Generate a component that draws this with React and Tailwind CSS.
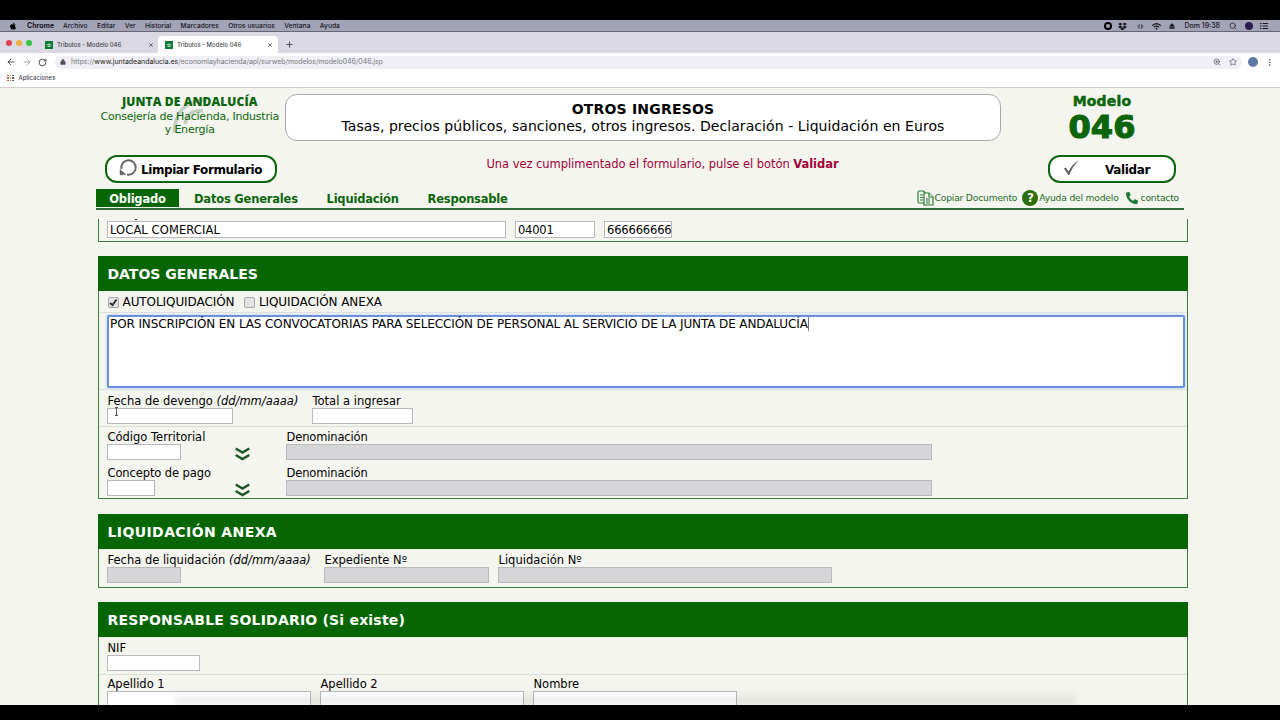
import { ArrowLeft, ArrowRight, RotateCw, Lock, Search, ZoomIn, Star, X, Plus, EllipsisVertical } from 'lucide-react'
import { FaApple, FaDropbox, FaWifi, FaPhoneAlt, FaEject, FaListUl } from 'react-icons/fa'

const menus = ['Archivo', 'Editar', 'Ver', 'Historial', 'Marcadores', 'Otros usuarios', 'Ventana', 'Ayuda']

const appColors = ['bg-[#d9534f]', 'bg-[#c9a04a]', 'bg-[#555555]']

function MenuBar() {
  return (
    <div className="h-[12px] shrink-0 flex items-center bg-[#a3a3b8] border-b border-[#666675] pt-px text-[6.7px] leading-[10px] font-medium text-[#16161c] whitespace-nowrap">
      <FaApple size={8} className="ml-[9px] mr-[10px] text-black" />
      <span className="font-bold mr-[9px] text-[7px]">Chrome</span>
      <div className="flex gap-[9.3px]">
        {menus.map((m) => <span key={m}>{m}</span>)}
      </div>
      <div className="ml-auto flex items-center pr-[12px]">
        <span className="size-2 rounded-full border-[2.5px] border-black mr-[6px]" />
        <FaDropbox size={9} className="mr-[10px]" />
        <svg width="7" height="7" viewBox="0 0 7 7" fill="none" stroke="#44444e" strokeWidth=".8" className="mr-[8px]">
          <path d="M1 2V5M2.300 1V6M5.700 2V5M4.500 1V6" />
        </svg>
        <FaWifi size={9} className="mr-[8px]" />
        <FaEject size={6} className="mr-[9px]" />
        <span className="mr-[9px] text-[7px]">Dom 19:38</span>
        <Search size={8} className="mr-[8px]" />
        <span className="size-2 rounded-full bg-[#2b1d50] mr-[7px]" />
        <FaListUl size={8} />
      </div>
    </div>
  )
}

function Favicon() {
  return (
    <svg width="8" height="8" viewBox="0 0 8 8">
      <rect width="8" height="8" fill="#0b7a35" />
      <path d="M1.5 4.2Q4 1.500 6.5 4.2M4 3V5.500M2.5 5.500H5.5" stroke="#d8efdd" strokeWidth=".8" fill="none" />
    </svg>
  )
}

function Tab({ active }) {
  return (
    <div className={active
      ? 'w-[120px] h-[17px] self-end flex items-center bg-white rounded-t pl-[7px] pr-[5px]'
      : 'w-[120px] h-[17px] self-end flex items-center pl-[7px] pr-[4px]'}
    >
      <Favicon />
      <span className="ml-[4px]">Tributos - Modelo 046</span>
      <X size={6} strokeWidth={3} className="ml-auto" />
    </div>
  )
}

function Browser() {
  return (
    <div className="shrink-0 text-[6px] font-medium text-[#4a4a50]">
      <div className="h-[21px] flex items-center bg-[#d9d8e3]">
        <div className="flex gap-1 pl-1.5 w-[38px]">
          <span className="size-[6px] rounded-full bg-[#e0404f]" />
          <span className="size-[6px] rounded-full bg-[#eeb13c]" />
          <span className="size-[6px] rounded-full bg-[#35c649]" />
        </div>
        <Tab />
        <Tab active />
        <Plus size={9} strokeWidth={2.5} className="ml-[7px] mt-[3px]" />
      </div>
      <div className="h-[18px] flex items-center bg-white">
        <ArrowLeft size={10} className="ml-1.5 text-[#333]" />
        <ArrowRight size={10} className="ml-1.5 text-[#999]" />
        <RotateCw size={9} strokeWidth={2.5} className="ml-1.5 text-[#444]" />
        <div className="ml-[8px] h-[13px] w-[1187px] rounded-full bg-[#f0eff5] flex items-center px-[5px]">
          <Lock size={6} fill="#555" />
          <span className="ml-[5px] text-[6.93px] font-normal text-[#77777d]">
            https://<span className="text-[#1d1d20]">www.juntadeandalucia.es</span>/economiayhacienda/apl/surweb/modelos/modelo046/046.jsp
          </span>
          <ZoomIn size={8} className="ml-auto" />
          <Star size={8} className="ml-2" />
        </div>
        <span className="ml-1.5 size-[10px] rounded-full bg-[#6078a5]" />
        <EllipsisVertical size={9} className="ml-[7px]" />
      </div>
      <div className="h-[17px] flex items-center bg-white border-b border-[#cfcfcf]">
        <div className="ml-[7px] -mt-[2px] grid grid-cols-3 gap-[1px]">
          {[0, 1, 2, 3, 4, 5, 6, 7, 8].map((i) => (
            <span key={i} className={`size-[1.5px] ${appColors[i % 3]}`} />
          ))}
        </div>
        <span className="ml-[5px] -mt-[3px]">Aplicaciones</span>
      </div>
    </div>
  )
}

function Header() {
  return (
    <div className="flex h-[62px] pt-1.5">
      <div className="relative ml-[94.5px] w-[190.5px] text-center text-[#0b650b]">
        <svg className="absolute left-[72px] top-[2px]" width="46" height="40" viewBox="0 0 46 40" fill="none" stroke="#c3cdc0" strokeWidth="3.5">
          <path d="M7 37C8 17 18 4 40 4" />
          <path d="M18 28C20 17 26 14 36 15" />
        </svg>
        <div className="relative text-[12px] leading-[16px] tracking-[0.1px] font-extrabold font-['Open_Sans',sans-serif]">JUNTA DE ANDALUCÍA</div>
        <div className="relative text-[11px] leading-[12.5px] pt-px tracking-[-0.22px]">Consejería de Hacienda, Industria<br />y Energía</div>
      </div>
      <div className="w-[716px] h-[47px] rounded-xl border border-[#a8a8a8] bg-white text-center text-[14px] leading-[17px] pt-[6px] text-black">
        <div className="font-bold tracking-[0.2px]">OTROS INGRESOS</div>
        <div className="tracking-[0.07px]">Tasas, precios públicos, sanciones, otros ingresos. Declaración - Liquidación en Euros</div>
      </div>
      <div className="w-[202px] text-center font-bold text-[#0b650b]">
        <div className="text-[14px] leading-[15px] tracking-[0.2px] [-webkit-text-stroke:0.5px]">Modelo</div>
        <div className="text-[32px] leading-[37px] [-webkit-text-stroke:1.2px]">046</div>
      </div>
    </div>
  )
}

function Actions() {
  return (
    <div className="flex h-[39px] pt-[5px] pl-[105px] pr-[104px]">
      <button className="w-[172px] h-[28px] flex items-center rounded-xl border-2 border-[#0b650b] bg-white text-[12px] tracking-[-0.42px] font-bold text-black whitespace-nowrap">
        <svg className="ml-[12px] -mt-[3px]" width="19" height="19" viewBox="0 0 19 19" fill="none" stroke="#666" strokeWidth="2">
          <path d="M2.500 11A7.200 7.200 0 1 1 8 16.500" />
          <path d="M1 11.500V17L7 16.500Z" fill="#666" strokeWidth=".5" />
        </svg>
        <span className="ml-[3px] pt-px">Limpiar Formulario</span>
      </button>
      <p className="flex-1 pt-[2px] text-center text-[11.5px] leading-[15px] tracking-[-0.05px] text-[#a00038]">
        Una vez cumplimentado el formulario, pulse el botón <b>Validar</b>
      </p>
      <button className="w-[128px] h-[28px] flex items-center rounded-xl border-2 border-[#0b650b] bg-white text-[12px] tracking-[-0.35px] font-bold text-black">
        <svg className="ml-[13px] -mt-1" width="17" height="17" viewBox="0 0 17 17" fill="#666">
          <path d="M1 9.5L2.800 8.500L5.500 12.500Q9 5 16 1Q10 7 6.200 16H5.200Z" />
        </svg>
        <span className="ml-[25px] pt-px">Validar</span>
      </button>
    </div>
  )
}

function Nav() {
  return (
    <nav className="ml-[96px] w-[1088px] h-[21px] flex items-start border-b-2 border-[#2e6b38] text-[11.5px] tracking-[-0.2px] leading-[20px] font-bold text-[#0b650b]">
      <span className="w-[83px] h-[18px] bg-[#066603] text-white text-center">Obligado</span>
      <span className="ml-[15px] w-[132.500px]">Datos Generales</span>
      <span className="w-[101px]">Liquidación</span>
      <span>Responsable</span>
      <div className="ml-auto mr-[5px] flex items-center text-[9.2px] leading-[17px] font-normal whitespace-nowrap text-[#1d6b28]">
        <svg width="17" height="16" viewBox="0 0 17 16" fill="#f4f5ef" stroke="#2d7a38" strokeWidth="1.2">
          <path d="M1 2.200Q1 1 2.200 1H6.500L9 3.500V13H2.200Q1 13 1 11.800Z" />
          <path d="M3 5H6M3 7.500H6M3 10H6" />
          <path d="M7 3H12L16 7V15H7Z" />
          <path d="M12 3V7H16M9 9H13M9 11H13M9 13H13" />
        </svg>
        <span className="ml-px">Copiar Documento</span>
        <span className="ml-[5px] size-[16px] rounded-full bg-[#2c6e0b] text-white text-[12px] leading-4 font-bold text-center">?</span>
        <span className="ml-[1px]">Ayuda del modelo</span>
        <FaPhoneAlt size={12} className="ml-[7px] rotate-90 -scale-x-100 text-[#1f7a3a]" />
        <span className="ml-[3px]">contacto</span>
      </div>
    </nav>
  )
}

function Field({ label, hint, box, disabled }) {
  return (
    <div>
      <div className="h-[14px] text-[11.5px] leading-[15px] pl-[0.5px] whitespace-nowrap">{label}{hint && <i> {hint}</i>}</div>
      <div className={`${box} h-4 border border-[#b9b9bd] ${disabled ? 'bg-[#d6d5d8]' : 'bg-white'}`} />
    </div>
  )
}

function DoubleChevron() {
  return (
    <svg className="ml-[2.500px] mr-[36.500px] mt-[17px]" width="15" height="14" viewBox="0 0 15 14" fill="none" stroke="#1c5527" strokeWidth="2.4">
      <path d="M.7 1.500L7.500 5.500L14.300 1.500M.7 8L7.500 12L14.300 8" />
    </svg>
  )
}

function Section({ title, className, children }) {
  return (
    <section className={`ml-[98px] w-[1090px] border border-[#3c7d40] ${className}`}>
      <h2 className="-mx-px -mt-px h-[35px] pl-[9.5px] bg-[#066603] text-white text-[14px] leading-[36px] font-bold">{title}</h2>
      {children}
    </section>
  )
}

export default function App() {
  return (
    <div className="w-[1280px] h-[720px] overflow-hidden bg-black pt-5 pb-[15px] flex flex-col font-['Inter',sans-serif]">
      <MenuBar />
      <Browser />
      <main className="relative flex-1 overflow-hidden bg-[#f4f5ef] font-['DejaVu_Sans',sans-serif] text-[12px] text-black">
        <Header />
        <Actions />
        <Nav />
        <div className="relative ml-[98px] mt-[9px] w-[1090px] h-[23px] border border-t-0 border-[#3c7d40] flex pl-[8px] pt-[2px] text-[11.5px] leading-[16px]">
          <span className="absolute left-[36px] top-0 w-[2px] h-px bg-[#333]" />
          <div className="w-[399px] h-[17px] border border-[#b9b9bd] bg-white pl-[2px] tracking-[0.1px]">LOCAL COMERCIAL</div>
          <div className="ml-[9px] w-[80px] h-[17px] border border-[#b9b9bd] bg-white pl-[2px] tracking-[-0.2px]">04001</div>
          <div className="ml-[9px] w-[68px] h-[17px] border border-[#b9b9bd] bg-white pl-[2px] tracking-[-0.15px] overflow-hidden">666666666</div>
        </div>

        <Section title="DATOS GENERALES" className="mt-[14px] h-[243px]">
          <div className="h-[22px] pt-px pl-[8.5px] flex items-center border-b border-[#e0e0dc] tracking-[-0.08px]">
            <span className="size-[11px] rounded-[2px] border border-[#aaa] bg-[#e2e2e4] flex items-center justify-center">
              <svg width="9" height="9" viewBox="0 0 9 9" fill="none" stroke="#333" strokeWidth="2"><path d="M1 5L3.500 7L7.500 1.500" /></svg>
            </span>
            <span className="ml-[4px]">AUTOLIQUIDACIÓN</span>
            <span className="ml-[9.500px] size-[11px] rounded-[2px] border border-[#aaa] bg-[#e2e2e4]" />
            <span className="ml-[4px]">LIQUIDACIÓN ANEXA</span>
          </div>
          <div className="h-[77px] pt-[2px] pl-[8px] border-b border-[#dcdeda]">
            <div className="w-[1078px] h-[73px] rounded-[2px] border-2 border-[#6a8fdc] bg-white pl-px leading-[15px] tracking-[-0.11px] whitespace-nowrap shadow-[0_0_2px_1px_#cfdffa]">
              <span className="border-r border-[#777]">POR INSCRIPCIÓN EN LAS CONVOCATORIAS PARA SELECCIÓN DE PERSONAL AL SERVICIO DE LA JUNTA DE ANDALUCÍA</span>
            </div>
          </div>
          <div className="relative h-[37px] pt-[4px] pl-[8px] flex border-b border-[#dcdeda]">
            <div className="w-[205px]"><Field label="Fecha de devengo" hint="(dd/mm/aaaa)" box="w-[126px]" /></div>
            <Field label="Total a ingresar" box="w-[101px]" />
            <svg className="absolute left-[14px] top-[17px]" width="7" height="9" viewBox="0 0 7 9" stroke="#555" fill="none"><path d="M2 .5H5M3.500 .5V8.500M2 8.500H5" /></svg>
          </div>
          <div className="h-[36px] pt-[3px] pl-[8px] flex">
            <div className="w-[125px]"><Field label="Código Territorial" box="w-[74px]" /></div>
            <DoubleChevron />
            <Field label={<span className="tracking-[-0.15px]">Denominación</span>} box="w-[646px]" disabled />
          </div>
          <div className="h-[36px] pt-[3px] pl-[8px] flex">
            <div className="w-[125px]"><Field label={<span className="tracking-[-0.1px]">Concepto de pago</span>} box="w-[48px]" /></div>
            <DoubleChevron />
            <Field label={<span className="tracking-[-0.15px]">Denominación</span>} box="w-[646px]" disabled />
          </div>
        </Section>

        <Section title={<span className="tracking-[0.4px]">LIQUIDACIÓN ANEXA</span>} className="mt-[15px] h-[74px]">
          <div className="pt-[4px] pl-[8px] flex">
            <div className="w-[217px]"><Field label="Fecha de liquidación" hint="(dd/mm/aaaa)" box="w-[74px]" disabled /></div>
            <div className="w-[174px]"><Field label="Expediente Nº" box="w-[165px]" disabled /></div>
            <Field label="Liquidación Nº" box="w-[334px]" disabled />
          </div>
        </Section>

        <Section title={<span className="tracking-[0.2px]">RESPONSABLE SOLIDARIO (Si existe)</span>} className="mt-[14px] h-[140px]">
          <div className="h-[38px] pt-[4px] pl-[8px] border-b border-[#dcdeda]">
            <Field label="NIF" box="w-[93px]" />
          </div>
          <div className="pt-[2px] pl-[8px] flex gap-[9px]">
            <Field label="Apellido 1" box="w-[204px]" />
            <Field label="Apellido 2" box="w-[204px]" />
            <Field label="Nombre" box="w-[204px]" />
          </div>
        </Section>
        <div className="absolute left-[175px] bottom-0 w-[900px] h-[14px] bg-linear-to-b from-transparent to-black/10 blur-[3px]" />
      </main>
    </div>
  )
}
